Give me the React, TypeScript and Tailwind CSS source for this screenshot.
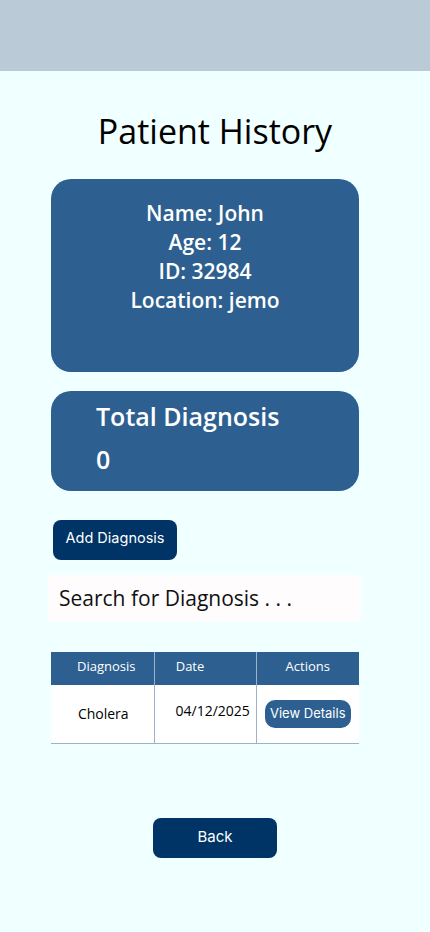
import React from 'react';

const sans = { fontFamily: '"Open Sans", "Noto Sans", sans-serif' };
const ui = { fontFamily: 'Inter, "Liberation Sans", sans-serif' };

const PatientHistory: React.FC = () => {
  const diagnoses = [{ name: 'Cholera', date: '04/12/2025' }];

  return (
    <div className="min-h-[932px] w-[430px] bg-[#f0ffff]" style={sans}>
      <div className="h-[71px] bg-[#bacad7]" />

      <h1 className="mt-[40px] text-center text-[34px] leading-[40px] text-black">Patient History</h1>

      <div className="ml-[51px] mt-[28px] flex h-[193px] w-[308px] flex-col items-center rounded-[20px] bg-[#2d6090] pt-[20px] text-[21px] font-semibold leading-[29px] text-white">
        <p>Name: John</p>
        <p>Age: 12</p>
        <p>ID: 32984</p>
        <p>Location: jemo</p>
      </div>

      <div className="ml-[51px] mt-[19px] h-[100px] w-[308px] rounded-[20px] bg-[#2d6090] pl-[45px] pt-[8px] text-white">
        <p className="text-[25px] font-semibold leading-[34px]">Total Diagnosis</p>
        <p className="mt-[11px] text-[25px] font-semibold leading-[30px]">0</p>
      </div>

      <button
        className="ml-[53px] mt-[29px] h-[40px] w-[124px] rounded-[8px] bg-[#003366] pb-[5px] text-[14.5px] text-white"
        style={ui}
      >
        Add Diagnosis
      </button>

      <div className="ml-[48px] mt-[15px] flex h-[47px] w-[313px] items-center bg-[#fffcfd] px-[11px] text-[21px] text-[#111]">
        Search for Diagnosis . . .
      </div>

      <table className="ml-[51px] mt-[30px] w-[308px] border-collapse text-[13px]">
        <thead>
          <tr className="h-[33px] bg-[#2d6090] font-normal text-white">
            <th className="w-[103px] border-r border-[#9db2c8] pb-[3px] pl-[8px] font-normal">Diagnosis</th>
            <th className="w-[102px] border-r border-[#9db2c8] pb-[3px] pr-[30px] font-normal">Date</th>
            <th className="pb-[3px] font-normal">Actions</th>
          </tr>
        </thead>
        <tbody>
          {diagnoses.map((d, i) => (
            <tr key={i} className="h-[58px] border-b border-[#9db2c8] bg-white text-[14px] text-black">
              <td className="border-r border-[#9db2c8] pl-[2px] text-center">{d.name}</td>
              <td className="border-r border-[#9db2c8] pb-[6px] pl-[21px]">{d.date}</td>
              <td className="text-center">
                <button
                  className="h-[28px] w-[86px] rounded-[10px] bg-[#2d6090] text-[13px] text-white"
                  style={ui}
                >
                  View Details
                </button>
              </td>
            </tr>
          ))}
        </tbody>
      </table>

      <div className="mt-[74px] flex justify-center">
        <button
          className="h-[40px] w-[124px] rounded-[8px] bg-[#003366] text-[15px] text-white"
          style={ui}
        >
          Back
        </button>
      </div>
    </div>
  );
};

export default function App() {
  return <PatientHistory />;
}
